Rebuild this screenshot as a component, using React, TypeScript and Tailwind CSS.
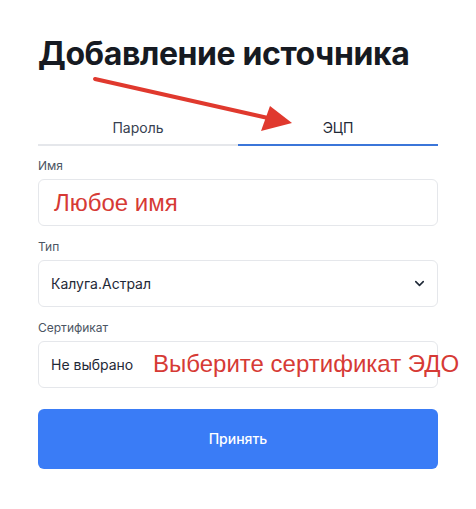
import { ChevronDown } from 'lucide-react';

export default function App() {
  return (
    <main className="w-[476px] min-h-[509px] bg-white relative font-['Inter',sans-serif]">
      {/* annotation arrow */}
      <svg className="absolute left-0 top-0 pointer-events-none" width="476" height="509">
        <line x1="95" y1="79" x2="268" y2="118" stroke="#e0392e" strokeWidth="4" strokeLinecap="round" />
        <polygon points="292,123 270,106 261,131" fill="#e0392e" />
      </svg>

      <div className="px-[38px] pt-[34px]">
        <h1 className="text-[32px] leading-[40px] font-bold text-[#161a22] tracking-[-0.4px]">
          Добавление источника
        </h1>

        {/* Tabs */}
        <div className="flex mt-9">
          <button className="flex-1 pt-2 pb-[6px] text-sm leading-5 text-[#374151] border-b-2 border-[#e5e7eb]">
            Пароль
          </button>
          <button className="flex-1 pt-2 pb-[6px] text-sm leading-5 text-[#1f2937] border-b-2 border-[#3b76d9]">
            ЭЦП
          </button>
        </div>

        {/* Name */}
        <label className="block mt-3 mb-[5px] text-xs leading-4 text-[#4b5563]">Имя</label>
        <div className="relative h-[47px] rounded-md border border-[#e5e7eb]">
          <span className="absolute left-[15px] top-[9px] text-[24px] leading-[28px] text-[#d63a35] font-['Liberation_Sans',Arial,sans-serif]">
            Любое имя
          </span>
        </div>

        {/* Type */}
        <label className="block mt-[13px] mb-[5px] text-xs leading-4 text-[#4b5563]">Тип</label>
        <div className="h-[47px] rounded-md border border-[#e5e7eb] flex items-center justify-between pl-3 pr-[10px]">
          <span className="text-sm text-[#1f2937]">Калуга.Астрал</span>
          <ChevronDown size={15} strokeWidth={2.5} className="text-[#1f2937]" />
        </div>

        {/* Certificate */}
        <label className="block mt-[13px] mb-[5px] text-xs leading-4 text-[#4b5563]">Сертификат</label>
        <div className="relative h-[47px] rounded-md border border-[#e5e7eb] flex items-center pl-3">
          <span className="text-sm text-[#1f2937]">Не выбрано</span>
          <span className="absolute left-[114px] top-[8px] whitespace-nowrap text-[24px] leading-[28px] text-[#d63a35] font-['Liberation_Sans',Arial,sans-serif]">
            Выберите сертификат ЭДО
          </span>
        </div>

        <button className="mt-[21px] w-full h-[60px] rounded-md bg-[#3a7cf6] text-white text-sm font-medium">
          Принять
        </button>
      </div>
    </main>
  );
}
